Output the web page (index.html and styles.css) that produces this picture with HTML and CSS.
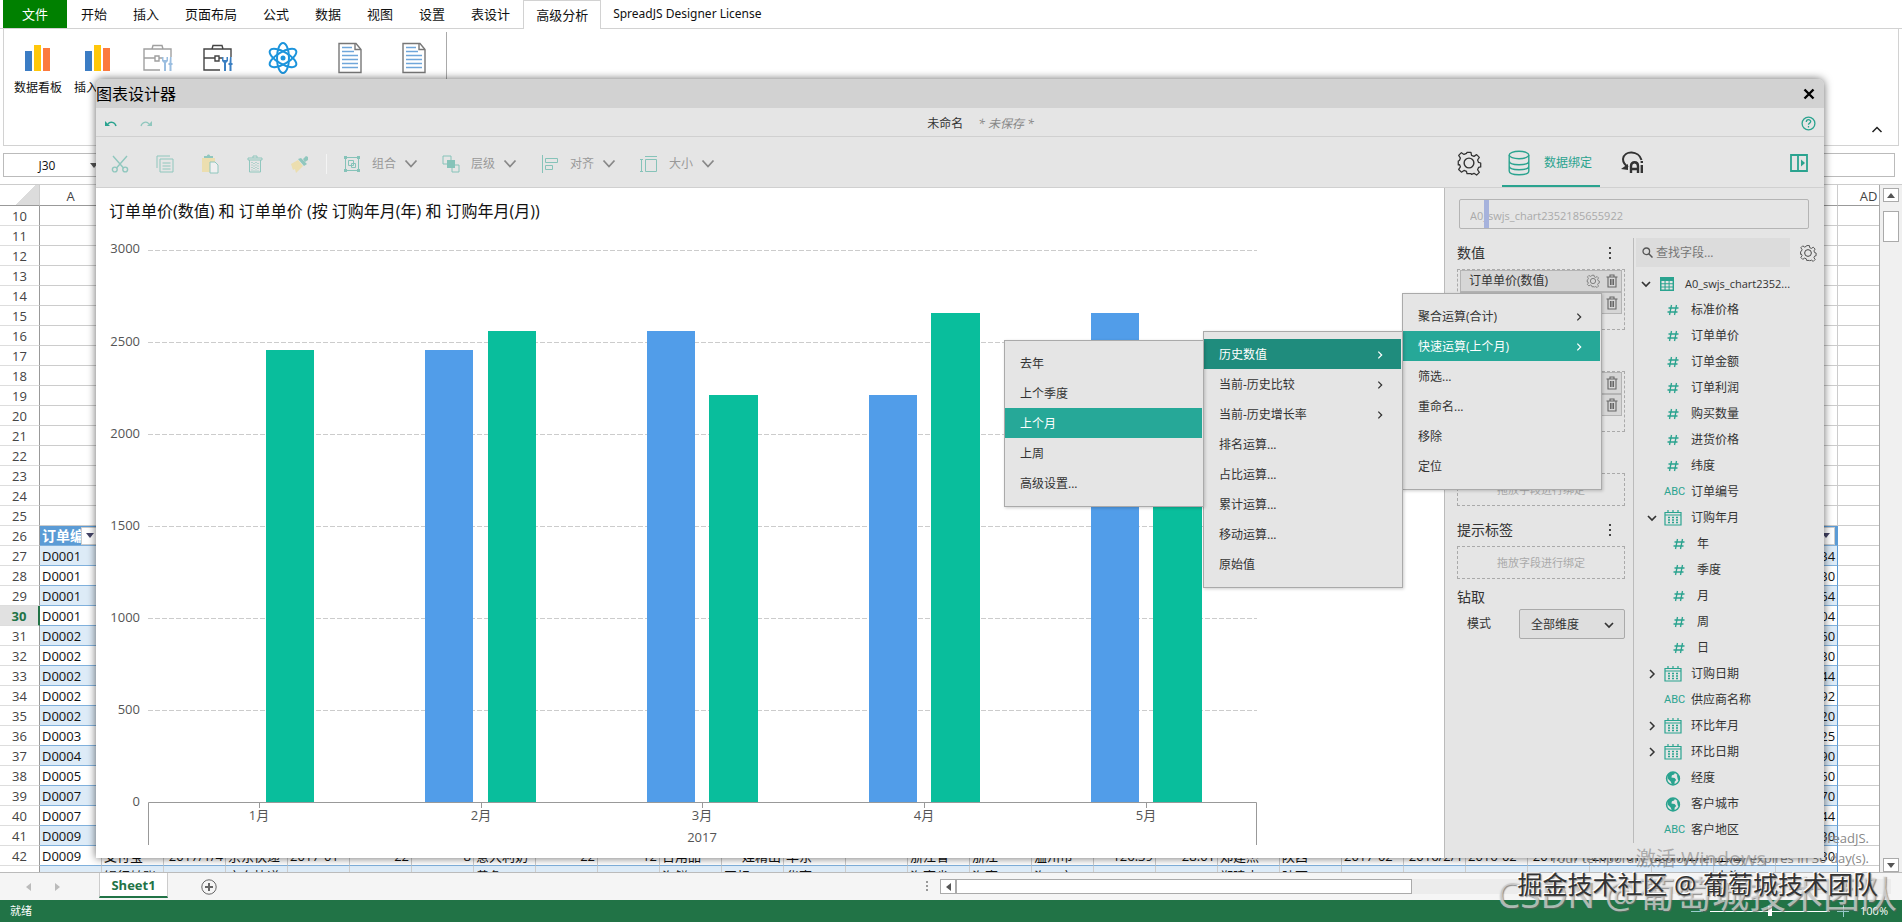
FILE: index.html
```html
<!DOCTYPE html>
<html lang="zh-CN">
<head>
<meta charset="utf-8">
<title>SpreadJS Designer</title>
<link rel="stylesheet" href="styles.css">
</head>
<body>
<svg class="sprite" aria-hidden="true">
  <symbol id="bars" viewBox="0 0 26 28"><path fill="#3b7cc4" d="M0 7h7v20H0z"/><path fill="#ffc70a" d="M9 1h7v26H9z"/><path fill="#fb7a3f" d="M18 4h7v23h-7z"/></symbol>
  <symbol id="case" viewBox="0 0 30 28"><g fill="none" stroke="#444" stroke-width="1.4"><path d="M17 26H1V5h27v8M1 14h11M16 14h3M12 12h4v5h-4zM9 5l1-3.500h9L20 5"/></g><path fill="#3a7fc2" d="M19 13v4l2 2v8h2v-8l2-2v-4h-1.500v3h-3v-3zM27 13h1.500v6h1v2h-1v6h-2v-6h-1v-2h1z"/></symbol>
  <symbol id="doc" viewBox="0 0 24 31"><path fill="#fff" stroke="#777" stroke-width="1.400" d="M1 1h17l5 6v23H1z"/><path fill="none" stroke="#777" stroke-width="1.400" d="M17 1v6h6"/><path stroke="#6fa6da" stroke-width="1.500" d="M4 5h10M4 9h12M4 13h16M4 17h16M4 21h16M4 25h16"/></symbol>
  <symbol id="gear" viewBox="0 0 24 24"><g fill="none" stroke="currentColor" stroke-width="1.300" stroke-linejoin="round"><path d="M10 1h4l.6 3.200 2.500 1 2.700-1.800 2.800 2.800-1.800 2.700 1 2.500 2.200.6v4l-2.200.6-1 2.300 1.800 2.700-2.800 2.800-2.700-1.800-2.500 1L14 23h-4l-.6-2.400-2.500-1-2.700 1.800-2.800-2.800 1.800-2.700-1-2.300L1 14v-4l1.200-.6 1-2.500L1.400 4.200l2.800-2.800 2.700 1.800 2.500-1z" transform="translate(1.200 1.200) scale(.9)"/><circle cx="12" cy="12" r="4.500"/></g></symbol>
  <symbol id="trash" viewBox="0 0 12 14"><g fill="none" stroke="currentColor" stroke-width="1.100"><path d="M.5 3h11M4 3V1h4v2M2 3v10h8V3M4.500 5v6M6 5v6M7.500 5v6"/></g></symbol>
  <symbol id="down" viewBox="0 0 12 12"><path fill="none" stroke="currentColor" stroke-width="1.700" d="M2 4l4 4 4-4"/></symbol>
  <symbol id="wide-down" viewBox="0 0 14 12"><path fill="none" stroke="#888" stroke-width="1.800" d="M1.500 2.500L7 8.500l5.500-6"/></symbol>
  <symbol id="right" viewBox="0 0 12 12"><path fill="none" stroke="currentColor" stroke-width="1.500" d="M4 2l4 4-4 4"/></symbol>
  <symbol id="num" viewBox="0 0 12 12"><path fill="none" stroke="currentColor" stroke-width="1.300" d="M4.500 1L2.500 11M9.500 1L7.500 11M1.500 4h10M.5 8h10"/></symbol>
  <symbol id="cal" viewBox="0 0 18 16"><path fill="none" stroke="currentColor" stroke-width="1.200" d="M1 2.500h16V15H1z"/><path stroke="currentColor" stroke-width="1.200" d="M1 5h16M4 0v3M9 0v3M14 0v3"/><path stroke="currentColor" stroke-width="1.500" stroke-dasharray="2 2" d="M4 7.500h11M4 10h11M4 12.500h11"/></symbol>
  <symbol id="globe" viewBox="0 0 14 14"><circle cx="7" cy="7" r="6" fill="#e5e5e5" stroke="currentColor" stroke-width="1.400"/><path fill="currentColor" d="M2 3l4-2 3 .3-1 2-2 .7-.5 2 3 .5 1.500 2L8.500 10v2.500L6 13l-1-3-3-3zM10.500 3.500L13 5v4l-1.500-1z"/></symbol>
  <symbol id="grid" viewBox="0 0 14 14"><path fill="currentColor" d="M0 0h14v14H0z"/><path fill="#e5e5e5" d="M1.500 4h3v2.200h-3zM5.600 4h3v2.200h-3zM9.600 4h3v2.200h-3zM1.500 7.200h3v2.200h-3zM5.600 7.200h3v2.200h-3zM9.600 7.200h3v2.200h-3zM1.500 10.400h3v2.200h-3zM5.600 10.400h3v2.200h-3zM9.600 10.400h3v2.200h-3z"/></symbol>
</svg>

<nav class="tabs">
  <button class="tab file">文件</button><button class="tab">开始</button><button class="tab">插入</button><button class="tab">页面布局</button><button class="tab">公式</button><button class="tab">数据</button><button class="tab">视图</button><button class="tab">设置</button><button class="tab">表设计</button><button class="tab active">高级分析</button><button class="tab">SpreadJS Designer License</button>
</nav>
<section class="ribbon">
  <button class="tool"><svg width="26" height="28"><use href="#bars"/></svg>数据看板</button>
  <button class="tool"><svg width="26" height="28"><use href="#bars"/></svg>插入图表</button>
  <button class="tool dim" aria-label="工具"><svg width="30" height="28"><use href="#case"/></svg></button>
  <button class="tool" aria-label="工具箱"><svg width="30" height="28"><use href="#case"/></svg></button>
  <button class="tool wide" aria-label="分析"><svg width="32" height="34" viewBox="0 0 32 34"><g fill="none" stroke="#1c94dc" stroke-width="2"><ellipse cx="16" cy="17" rx="6" ry="15"/><ellipse cx="16" cy="17" rx="6" ry="15" transform="rotate(60 16 17)"/><ellipse cx="16" cy="17" rx="6" ry="15" transform="rotate(120 16 17)"/></g><circle cx="16" cy="17" r="2.500" fill="#1c94dc"/></svg></button>
  <button class="tool mid" aria-label="文档"><svg width="24" height="31"><use href="#doc"/></svg></button>
  <button class="tool mid" aria-label="报表"><svg width="24" height="31"><use href="#doc"/></svg></button>
  <span class="ribbon-line"></span>
  <button class="collapse" aria-label="折叠"><svg width="12" height="12" viewBox="0 0 12 12"><path fill="none" stroke="#222" stroke-width="1.500" d="M1.500 8L6 3.500 10.500 8"/></svg></button>
</section>
<section class="formula">
  <div class="namebox"><input aria-label="名称框" value="J30"><i class="tri"></i></div>
  <input class="fx" aria-label="编辑栏">
</section>

<main class="sheet">
  <div class="view">
    <table>
      <colgroup><col class="c-head"><col span="30" class="c"></colgroup>
      <thead><tr><th class="corner"></th><th>A</th><th colspan="27"></th><th></th><th>AD</th></tr></thead>
      <tbody>
      <tr><th>10</th><td></td><td colspan="27"></td><td></td><td></td></tr>
      <tr><th>11</th><td></td><td colspan="27"></td><td></td><td></td></tr>
      <tr><th>12</th><td></td><td colspan="27"></td><td></td><td></td></tr>
      <tr><th>13</th><td></td><td colspan="27"></td><td></td><td></td></tr>
      <tr><th>14</th><td></td><td colspan="27"></td><td></td><td></td></tr>
      <tr><th>15</th><td></td><td colspan="27"></td><td></td><td></td></tr>
      <tr><th>16</th><td></td><td colspan="27"></td><td></td><td></td></tr>
      <tr><th>17</th><td></td><td colspan="27"></td><td></td><td></td></tr>
      <tr><th>18</th><td></td><td colspan="27"></td><td></td><td></td></tr>
      <tr><th>19</th><td></td><td colspan="27"></td><td></td><td></td></tr>
      <tr><th>20</th><td></td><td colspan="27"></td><td></td><td></td></tr>
      <tr><th>21</th><td></td><td colspan="27"></td><td></td><td></td></tr>
      <tr><th>22</th><td></td><td colspan="27"></td><td></td><td></td></tr>
      <tr><th>23</th><td></td><td colspan="27"></td><td></td><td></td></tr>
      <tr><th>24</th><td></td><td colspan="27"></td><td></td><td></td></tr>
      <tr><th>25</th><td></td><td colspan="27"></td><td></td><td></td></tr>
      <tr class="t title"><th>26</th><td><div class="fcell"><span>订单编号</span><b class="filter"></b></div></td><td colspan="27"></td><td><div class="fcell"><span></span><b class="filter"></b></div></td><td></td></tr>
      <tr class="t band"><th>27</th><td>D0001</td><td colspan="27"></td><td>34</td><td></td></tr>
      <tr class="t"><th>28</th><td>D0001</td><td colspan="27"></td><td>30</td><td></td></tr>
      <tr class="t band"><th>29</th><td>D0001</td><td colspan="27"></td><td>64</td><td></td></tr>
      <tr class="t current"><th>30</th><td>D0001</td><td colspan="27"></td><td>04</td><td></td></tr>
      <tr class="t band"><th>31</th><td>D0002</td><td colspan="27"></td><td>60</td><td></td></tr>
      <tr class="t"><th>32</th><td>D0002</td><td colspan="27"></td><td>30</td><td></td></tr>
      <tr class="t band"><th>33</th><td>D0002</td><td colspan="27"></td><td>44</td><td></td></tr>
      <tr class="t"><th>34</th><td>D0002</td><td colspan="27"></td><td>92</td><td></td></tr>
      <tr class="t band"><th>35</th><td>D0002</td><td colspan="27"></td><td>20</td><td></td></tr>
      <tr class="t"><th>36</th><td>D0003</td><td colspan="27"></td><td>25</td><td></td></tr>
      <tr class="t band"><th>37</th><td>D0004</td><td colspan="27"></td><td>90</td><td></td></tr>
      <tr class="t"><th>38</th><td>D0005</td><td colspan="27"></td><td>60</td><td></td></tr>
      <tr class="t band"><th>39</th><td>D0007</td><td colspan="27"></td><td>70</td><td></td></tr>
      <tr class="t"><th>40</th><td>D0007</td><td colspan="27"></td><td>44</td><td></td></tr>
      <tr class="t band"><th>41</th><td>D0009</td><td colspan="27"></td><td>30</td><td></td></tr>
      <tr class="t data"><th>42</th><td>D0009</td><td>支付宝</td><td class="r">2017/1/4</td><td>京东快递</td><td>2017-01</td><td class="r">22</td><td class="r">8</td><td>意大利奶</td><td class="r">22</td><td class="r">12</td><td>日用品</td><td class="r">娃精出</td><td>华东</td><td></td><td>浙江省</td><td>浙江</td><td>温州市</td><td class="r">126.39</td><td class="r">28.01</td><td>郑建杰</td><td>陕西</td><td>2017-02</td><td class="r">2016/2/1</td><td>2016-02</td><td class="r">2017/1/1</td><td>2017-01</td><td>2017/2/1</td><td>上海</td><td>30</td><td></td></tr>
      <tr class="t band data"><th></th><td></td><td>银行转账</td><td class="r">2017/1/4</td><td>京东快递</td><td></td><td></td><td></td><td>黄色</td><td></td><td></td><td>海鲜</td><td>国标</td><td>华南</td><td></td><td>海南省</td><td>海南</td><td>海口市</td><td></td><td></td><td>郑建杰</td><td>陕西</td><td></td><td class="r">2016/2/1</td><td></td><td class="r">2017/1/1</td><td></td><td>2017/2/1</td><td>上海</td><td></td><td></td></tr>
      </tbody>
    </table>
    <p class="license">Powered by SpreadJS.<br>Your temporary deployment key expires in 30 day(s).</p>
  </div>
  <div class="vbar"><button aria-label="上"><i class="tri up"></i></button><span class="vthumb"></span><button class="last" aria-label="下"><i class="tri"></i></button></div>
</main>
<section class="sheetbar">
  <i class="nav l"></i><i class="nav rr"></i>
  <button class="sheet-tab">Sheet1</button>
  <button class="add" aria-label="新建"><svg width="16" height="16" viewBox="0 0 16 16"><circle cx="8" cy="8" r="7.200" fill="none" stroke="#666"/><path stroke="#666" stroke-width="2" d="M8 4v8M4 8h8"/></svg></button>
  <span class="grip"></span>
  <div class="hbar"><button aria-label="左"><i class="nav l dark"></i></button><span class="hthumb"></span></div>
</section>
<footer class="status"><span>就绪</span><div class="zoom"><b class="minus"></b><input type="range" aria-label="缩放" value="50"><b class="plus"></b><span>100%</span></div></footer>

<section class="dialog" role="dialog" aria-label="图表设计器">
  <header class="d-title"><h1>图表设计器</h1><button aria-label="关闭"><svg width="12" height="12" viewBox="0 0 12 12"><path stroke="#000" stroke-width="2.400" d="M1.500 1.500l9 9M10.500 1.500l-9 9"/></svg></button></header>
  <div class="d-bar">
    <button class="undo" aria-label="撤销"><svg width="12" height="8" viewBox="0 0 12 8"><path fill="#2aa38f" d="M0 1l5 5H0z"/><path fill="none" stroke="#2aa38f" stroke-width="1.500" d="M3 4c2-3 7-2 8 2"/></svg></button>
    <button class="undo faint" aria-label="重做"><svg width="12" height="8" viewBox="0 0 12 8"><path fill="#2aa38f" d="M12 1v5H7z"/><path fill="none" stroke="#2aa38f" stroke-width="1.200" d="M9 4C7 1 2 2 1 6"/></svg></button>
    <p class="doc-name">未命名 <em>* 未保存 *</em></p>
    <button class="help" aria-label="帮助"><svg width="15" height="15" viewBox="0 0 15 15"><circle cx="7.500" cy="7.500" r="6.400" fill="none" stroke="#2aa38f" stroke-width="1.300"/><path fill="none" stroke="#2aa38f" stroke-width="1.300" d="M5.300 6c0-3 4.400-3 4.400-.4 0 1.600-2.200 1.500-2.200 3.200M7.500 10v1.400"/></svg></button>
  </div>
  <div class="d-tools">
    <div class="edit">
      <button class="ib" aria-label="剪切"><svg width="18" height="18" viewBox="0 0 18 18"><g fill="none" stroke="#2aa38f" stroke-width="1.400"><path d="M2 1l10.500 12M16 1L5.500 13"/><circle cx="3.800" cy="14.500" r="2.400"/><circle cx="14.200" cy="14.500" r="2.400"/></g></svg></button>
      <button class="ib" aria-label="复制"><svg width="18" height="18" viewBox="0 0 18 18"><g fill="none" stroke="#2aa38f"><path d="M1 13V1h13M4 4h13v13H4zM6.500 8h8M6.500 11h8M6.500 14h8"/></g></svg></button>
      <button class="ib" aria-label="粘贴"><svg width="18" height="20" viewBox="0 0 18 20"><path fill="#f5d76e" d="M1 4h13v14H1z"/><path fill="#2aa38f" d="M3 4V2h3c0-2 3-2 3 0h3v2z"/><path fill="#fff" stroke="#2aa38f" d="M9 8h5l3 3v8H9z"/></svg></button>
      <button class="ib" aria-label="删除"><svg width="16" height="18" viewBox="0 0 16 18"><g fill="none" stroke="#2aa38f"><path d="M1 3h14v2H1zM6 3V1h4v2M2.500 5v12h11V5"/><path stroke-width="1.200" stroke-dasharray="1 1.500" d="M5 7v9M7 8v8M9 7v9M11 8v8"/></g></svg></button>
      <button class="ib" aria-label="格式刷"><svg width="18" height="18" viewBox="0 0 18 18"><path fill="#f5d76e" d="M0 9l7-4 5 6-5 5-2 2-1-4-2 1z"/><path fill="#2aa38f" d="M7 4l3-1 6 6-3 2zM12 4l3-3 2 1v3l-3 2z"/></svg></button>
      <span class="sep"></span>
      <button class="drop"><svg width="18" height="18" viewBox="0 0 18 18"><g fill="none" stroke="#2aa38f"><path d="M2.500 2.500h13v13h-13zM5.500 5.500h5v5h-5zM8.500 8.500h4v4h-4z"/></g><path fill="#2aa38f" d="M1 1h3v3H1zM14 1h3v3h-3zM1 14h3v3H1zM14 14h3v3h-3z"/></svg><span>组合</span><svg width="14" height="12"><use href="#wide-down"/></svg></button>
      <button class="drop"><svg width="18" height="18" viewBox="0 0 18 18"><g fill="none" stroke="#2aa38f"><path d="M1 1h8v8H1zM10 10h7v7h-7z"/></g><path fill="#2aa38f" d="M5 5h8v8H5z"/></svg><span>层级</span><svg width="14" height="12"><use href="#wide-down"/></svg></button>
      <button class="drop"><svg width="18" height="18" viewBox="0 0 18 18"><g fill="none" stroke="#2aa38f"><path d="M1.500 0v18M4.500 3.500h12v4h-12zM4.500 10.500h7v4h-7z"/></g></svg><span>对齐</span><svg width="14" height="12"><use href="#wide-down"/></svg></button>
      <button class="drop"><svg width="18" height="18" viewBox="0 0 18 18"><g fill="none" stroke="#2aa38f"><path d="M5.500 4.500h11v12h-11zM5 1.500h12M1.500 4v13M0 4.500h3M0 16.500h3"/></g></svg><span>大小</span><svg width="14" height="12"><use href="#wide-down"/></svg></button>
    </div>
    <div class="modes">
      <button class="mode" aria-label="设置"><svg width="26" height="26"><use href="#gear"/></svg></button>
      <button class="mode on"><svg width="22" height="26" viewBox="0 0 22 26"><g fill="none" stroke="#2aa38f" stroke-width="1.400"><ellipse cx="11" cy="5" rx="9.800" ry="3.800"/><path d="M1.200 5v16c0 5 19.600 5 19.600 0V5M1.200 11c0 5 19.600 5 19.600 0M1.200 16c0 5 19.600 5 19.600 0"/></g></svg><span>数据绑定</span></button>
      <button class="mode" aria-label="AI"><svg width="24" height="24" viewBox="0 0 24 24"><path fill="none" stroke="#333" stroke-width="2" d="M21.500 9C19-.5 4-1 3 8c0 4 2 6 5 8"/><path fill="#333" d="M1 18l7-5v6z"/><path fill="none" stroke="#333" stroke-width="2.400" d="M11 22v-7c0-5 7-5 7 0v7M11 18h7M21.800 14v8M21.800 10v2"/></svg></button>
      <button class="panel-toggle" aria-label="收起面板"><svg width="18" height="18" viewBox="0 0 18 18"><path fill="none" stroke="#2aa38f" stroke-width="1.800" d="M1 1h16v16H1zM8 1v16"/><path fill="#2aa38f" d="M11 5.500l4 3.500-4 3.500z"/></svg></button>
    </div>
  </div>
  <div class="d-body">
    <svg class="chart" viewBox="0 0 1348 670" role="img" aria-label="订单单价">
      <text class="ct" x="13" y="29">订单单价(数值) 和 订单单价 (按 订购年月(年) 和 订购年月(月))</text>
      <g class="ylab"><text x="44" y="65">3000</text><text x="44" y="158">2500</text><text x="44" y="250">2000</text><text x="44" y="342">1500</text><text x="44" y="434">1000</text><text x="44" y="526">500</text><text x="44" y="618">0</text></g>
      <path class="gl" d="M52 62.500h1109M52 154.500h1109M52 246.500h1109M52 338.500h1109M52 430.500h1109M52 522.500h1109"/>
      <path fill="#519de9" d="M329 162h48v452h-48zM551 143h48v471h-48zM773 207h48v407h-48zM995 125h48v489h-48z"/>
      <path fill="#09be9c" d="M170 162h48v452h-48zM392 143h48v471h-48zM613 207h49v407h-49zM835 125h49v489h-49zM1057 220h49v394h-49z"/>
      <path class="ax" d="M52.500 657v-42.500h1108V657M163.500 614v6M385.500 614v6M606.500 614v6M828.500 614v6M1050.500 614v6"/>
      <g class="xlab"><text x="163" y="632">1月</text><text x="385" y="632">2月</text><text x="606" y="632">3月</text><text x="828" y="632">4月</text><text x="1050" y="632">5月</text><text x="606" y="654">2017</text></g>
    </svg>
    <aside class="side">
      <div class="id-field"><input aria-label="数据集" value="A0_swjs_chart2352185655922"></div>
      <div class="cols">
        <div class="bind">
          <h2>数值 <i class="dots"></i></h2>
          <div class="zone">
            <div class="pill"><span>订单单价(数值)</span><svg width="14" height="14"><use href="#gear"/></svg><svg width="12" height="14"><use href="#trash"/></svg></div>
            <div class="pill"><span></span><svg width="12" height="14"><use href="#trash"/></svg></div>
          </div>
          <div class="zone after">
            <div class="pill"><span></span><svg width="12" height="14"><use href="#trash"/></svg></div>
            <div class="pill"><span></span><svg width="12" height="14"><use href="#trash"/></svg></div>
          </div>
          <div class="zone empty after">拖放字段进行绑定</div>
          <h2 class="next">提示标签 <i class="dots"></i></h2>
          <div class="zone empty">拖放字段进行绑定</div>
          <h2 class="next drill">钻取</h2>
          <div class="mode-row"><label for="mode">模式</label><div class="sel"><select id="mode"><option>全部维度</option></select><svg width="12" height="12"><use href="#down"/></svg></div></div>
        </div>
        <div class="fields">
          <div class="find"><label><svg width="11" height="11" viewBox="0 0 11 11"><circle cx="4.300" cy="4.300" r="3.300" fill="none" stroke="#555" stroke-width="1.300"/><path stroke="#555" stroke-width="1.500" d="M6.800 6.800l3.700 3.700"/></svg><input placeholder="查找字段..." aria-label="查找字段"></label><svg class="find-gear" width="18" height="18"><use href="#gear"/></svg></div>
          <ul class="tree">
            <li class="root"><svg class="tw" width="12" height="12"><use href="#down"/></svg><svg class="ic" width="14" height="14"><use href="#grid"/></svg><span>A0_swjs_chart2352...</span></li>
            <li><i class="tw"></i><svg class="ic" width="12" height="12"><use href="#num"/></svg>标准价格</li>
            <li><i class="tw"></i><svg class="ic" width="12" height="12"><use href="#num"/></svg>订单单价</li>
            <li><i class="tw"></i><svg class="ic" width="12" height="12"><use href="#num"/></svg>订单金额</li>
            <li><i class="tw"></i><svg class="ic" width="12" height="12"><use href="#num"/></svg>订单利润</li>
            <li><i class="tw"></i><svg class="ic" width="12" height="12"><use href="#num"/></svg>购买数量</li>
            <li><i class="tw"></i><svg class="ic" width="12" height="12"><use href="#num"/></svg>进货价格</li>
            <li><i class="tw"></i><svg class="ic" width="12" height="12"><use href="#num"/></svg>纬度</li>
            <li><i class="tw"></i><span class="ic abc">ABC</span>订单编号</li>
            <li><svg class="tw" width="12" height="12"><use href="#down"/></svg><svg class="ic" width="18" height="16"><use href="#cal"/></svg>订购年月</li>
            <li class="sub"><i class="tw"></i><svg class="ic" width="12" height="12"><use href="#num"/></svg>年</li>
            <li class="sub"><i class="tw"></i><svg class="ic" width="12" height="12"><use href="#num"/></svg>季度</li>
            <li class="sub"><i class="tw"></i><svg class="ic" width="12" height="12"><use href="#num"/></svg>月</li>
            <li class="sub"><i class="tw"></i><svg class="ic" width="12" height="12"><use href="#num"/></svg>周</li>
            <li class="sub"><i class="tw"></i><svg class="ic" width="12" height="12"><use href="#num"/></svg>日</li>
            <li><svg class="tw" width="12" height="12"><use href="#right"/></svg><svg class="ic" width="18" height="16"><use href="#cal"/></svg>订购日期</li>
            <li><i class="tw"></i><span class="ic abc">ABC</span>供应商名称</li>
            <li><svg class="tw" width="12" height="12"><use href="#right"/></svg><svg class="ic" width="18" height="16"><use href="#cal"/></svg>环比年月</li>
            <li><svg class="tw" width="12" height="12"><use href="#right"/></svg><svg class="ic" width="18" height="16"><use href="#cal"/></svg>环比日期</li>
            <li><i class="tw"></i><svg class="ic" width="15" height="15"><use href="#globe"/></svg>经度</li>
            <li><i class="tw"></i><svg class="ic" width="15" height="15"><use href="#globe"/></svg>客户城市</li>
            <li><i class="tw"></i><span class="ic abc">ABC</span>客户地区</li>
          </ul>
        </div>
      </div>
    </aside>
  </div>
  <div class="menu m1">
    <button>聚合运算(合计)<svg width="10" height="10"><use href="#right"/></svg></button><button class="hl">快速运算(上个月)<svg width="10" height="10"><use href="#right"/></svg></button><button>筛选...</button><button>重命名...</button><button>移除</button><button>定位</button>
  </div>
  <div class="menu m2">
    <button class="hl deep">历史数值<svg width="10" height="10"><use href="#right"/></svg></button><button>当前-历史比较<svg width="10" height="10"><use href="#right"/></svg></button><button>当前-历史增长率<svg width="10" height="10"><use href="#right"/></svg></button><button>排名运算...</button><button>占比运算...</button><button>累计运算...</button><button>移动运算...</button><button>原始值</button>
  </div>
  <div class="menu m3">
    <button>去年</button><button>上个季度</button><button class="hl">上个月</button><button>上周</button><button>高级设置...</button>
  </div>
</section>
<div class="mark activate">激活 Windows</div>
<div class="mark csdn">CSDN @葡萄城技术团队</div>
<div class="mark juejin">掘金技术社区 @ 葡萄城技术团队</div>
</body>
</html>
```
FILE: styles.css
```css
* { box-sizing: border-box; }
body { margin: 0; height: 100vh; display: flex; flex-direction: column; overflow: hidden; position: relative; background: #fff; color: #111; font: 12px/16px "Open Sans", "Noto Sans CJK SC", sans-serif; }
button, input, select { font: inherit; color: inherit; border: 0; background: none; padding: 0; margin: 0; border-radius: 0; }
h1, h2, p, ul { margin: 0; padding: 0; font-weight: normal; }
li { list-style: none; }
svg { flex: none; display: block; }
.sprite { position: absolute; width: 0; height: 0; }
.tri { display: block; border: 4px solid transparent; border-top: 5px solid #555; border-bottom: 0; }
.tri.up { border-top: 0; border-bottom: 5px solid #555; }

.tabs { flex: none; display: flex; height: 29px; padding-left: 3px; border-bottom: 1px solid #d2d2d2; }
.tab { padding: 0 13px; font-family: "Noto Sans", "Noto Sans CJK SC", sans-serif; font-size: 13px; white-space: nowrap; }
.tab:last-child { padding-left: 12px; font-size: 12px; }
.tab.file { width: 64px; background: #008000; color: #fff; margin-right: 1px; }
.tab.active { height: 29px; padding: 0 12px; border: 1px solid #d2d2d2; border-width: 1px 1px 0; background: #fff; }
.ribbon { flex: none; display: flex; height: 117px; margin: 0 3px; padding-left: 4px; border: 1px solid #d2d2d2; border-top: 0; }
.tool { display: flex; flex-direction: column; align-items: center; width: 60px; height: 90px; padding-top: 12px; white-space: nowrap; overflow: hidden; }
.tool svg { height: 34px; margin-bottom: 5px; }
.tool.dim { opacity: .5; }
.tool.wide { width: 70px; }
.tool.mid { width: 64px; }
.ribbon-line { width: 1px; height: 100px; margin-top: 3px; background: #aaa; }
.collapse { margin: 95px 15px 0 auto; height: 12px; }
.formula { flex: none; display: flex; gap: 6px; height: 39px; padding: 7px 7px 7px 3px; border-bottom: 1px solid #ccc; }
.namebox { display: flex; align-items: center; width: 105px; border: 1px solid #bbb; }
.namebox input { width: 86px; padding-top: 1px; text-align: center; font-size: 12px; }
.fx { flex: 1; border: 1px solid #bbb; }

.sheet { flex: 1; min-height: 0; display: grid; grid-template-columns: 1fr 22px; }
.view { position: relative; overflow: hidden; border-right: 1px solid #aaa; }
.view table { table-layout: fixed; width: 1900px; border-spacing: 0; font-size: 13px; line-height: 18px; }
.c-head { width: 40px; }
.c { width: 62px; }
.view th { height: 20px; padding: 0; border: 1px solid #ddd; border-width: 0 0 1px; font-weight: normal; color: #444; overflow: hidden; }
.view tbody th { border-right: 1px solid #999; }
.view thead th { height: 21px; padding-top: 2px; border-bottom-color: #999; border-right: 1px solid #ccc; }
.view .corner { background: linear-gradient(135deg, #fff 60%, #dcdcdc 60%); }
.view td { height: 20px; padding: 0 2px; border: 1px solid #ccc; border-width: 0 1px 1px 0; white-space: nowrap; overflow: hidden; color: #111; }
.view .t td { border-bottom-color: #7fb0dc; }
.view .t td:nth-last-child(2) { text-align: right; border-right-color: #5b9bd5; }
.view .t td:last-child { border-bottom-color: #ccc; background: #fff; }
.view .r { text-align: right; }
.view .band td { background: #ddebf7; }
.view .title td { background: #5b9bd5; color: #fff; font-weight: bold; }
.view .title td:last-child { background: #fff; }
.view .current th { background: #e1e1e1; color: #217346; font-weight: bold; border-right: 2px solid #217346; }
.fcell { display: flex; justify-content: space-between; height: 18px; }
.fcell span { flex: 1; width: 0; overflow: hidden; font-size: 14px; }
.filter { display: grid; place-items: center; width: 18px; background: #fff; border: 1px solid #ccc; }
.filter::before { content: ""; border: 4px solid transparent; border-top: 5px solid #446; border-bottom: 0; }
.license { position: absolute; right: 10px; bottom: 4px; text-align: right; font-size: 13px; line-height: 20px; color: #888; white-space: nowrap; }
.vbar { display: flex; flex-direction: column; align-items: center; padding-top: 3px; background: #f0f0f0; }
.vbar button { display: grid; place-items: center; width: 16px; height: 14px; background: #fff; border: 1px solid #aaa; }
.vthumb { width: 16px; height: 31px; margin-top: 9px; background: #fff; border: 1px solid #aaa; }
.vbar .last { margin-top: auto; }

.sheetbar { flex: none; display: flex; align-items: center; height: 28px; background: #f5f5f5; border-top: 1px solid #bbb; }
.nav { border: 4px solid transparent; border-left: 5px solid #bbb; border-right: 0; }
.nav.l { border-right: 5px solid #bbb; border-left: 0; margin-left: 26px; }
.nav.rr { margin-left: 24px; }
.nav.l.dark { border-right-color: #555; margin: 0; }
.sheet-tab { align-self: flex-start; width: 69px; height: 25px; margin-left: 39px; background: #fff; border: 1px solid #ccc; border-width: 0 1px 2px; border-bottom-color: #217346; color: #217346; font-size: 13px; font-weight: bold; }
.add { margin-left: 33px; }
.grip { width: 2px; height: 11px; margin-left: auto; background: repeating-linear-gradient(#999 0 2px, transparent 2px 4px); }
.hbar { display: flex; flex: 0 0 50%; height: 15px; margin: 0 11px 0 12px; background: #ececec; }
.hbar button { display: grid; place-items: center; width: 16px; background: #fff; border: 1px solid #aaa; }
.hthumb { width: 48%; background: #fff; border: 1px solid #aaa; }
.status { flex: none; display: flex; align-items: center; justify-content: space-between; height: 22px; padding: 0 14px 0 10px; background: #217346; color: #fff; font-size: 11px; }
.zoom { display: flex; align-items: center; gap: 7px; }
.zoom input { appearance: none; width: 120px; height: 1px; background: #fff; }
.zoom input::-webkit-slider-thumb { appearance: none; width: 4px; height: 10px; background: #fff; }
.minus { width: 12px; height: 1px; background: #9cc; }
.plus { width: 12px; height: 12px; background: linear-gradient(#9cc, #9cc) center / 12px 1px no-repeat, linear-gradient(#9cc, #9cc) center / 1px 12px no-repeat; }
.zoom span { margin-left: 4px; }

.dialog { position: absolute; inset: 79px 78px 64px 96px; display: flex; flex-direction: column; background: #e5e5e5; color: #333; border-radius: 6px 6px 0 0; box-shadow: 0 0 9px rgba(0, 0, 0, .6); }
.d-title { flex: none; display: flex; align-items: center; justify-content: space-between; height: 29px; padding-right: 9px; background: #d2d2d2; border-radius: 6px 6px 0 0; color: #000; }
.d-title h1 { font-size: 16px; line-height: 24px; }
.d-bar { flex: none; display: flex; align-items: center; height: 29px; padding: 3px 8px 0 9px; border-bottom: 1px solid #d0d0d0; }
.undo { width: 12px; margin-right: 23px; }
.faint { opacity: .45; }
.doc-name { flex: 1; padding-right: 15px; text-align: center; }
.doc-name em { margin-left: 12px; color: #888; }
.d-tools { flex: none; display: flex; justify-content: space-between; height: 51px; border-bottom: 1px solid #d0d0d0; }
.edit { display: flex; align-items: center; padding: 3px 0 0 1px; }
.ib { display: grid; place-items: center; width: 45px; opacity: .45; }
.sep { width: 1px; height: 20px; margin: 0 10px 0 4px; background: #f4f4f4; }
.drop { display: flex; align-items: center; width: 99px; padding-left: 6px; color: #999; }
.drop svg:first-child { opacity: .5; }
.drop span { margin: 0 8px 0 11px; }
.modes { flex: none; display: flex; width: 379px; padding-top: 2px; }
.mode { display: grid; place-items: center; width: 48px; color: #333; }
.mode.on { display: flex; align-items: center; gap: 14px; width: 98px; margin: 0 8px 0 9px; padding: 2px 6px 0; color: #2aa38f; border-bottom: 2px solid #2aa38f; }
.panel-toggle { margin: 0 16px 0 auto; }
.d-body { flex: 1; min-height: 0; display: flex; background: #fff; }
.chart { flex: 1; min-width: 0; height: auto; align-self: flex-start; font-family: "Open Sans", "Noto Sans CJK SC", sans-serif; }
.ct { font-size: 16px; fill: #111; }
.ylab { font-size: 13px; text-anchor: end; fill: #555; }
.xlab { font-size: 13px; text-anchor: middle; fill: #555; }
.gl { stroke: #ccc; stroke-dasharray: 5 2; }
.ax { stroke: #999; fill: none; }

.side { flex: none; display: flex; flex-direction: column; width: 380px; padding: 11px 15px 15px 0; background: #e5e5e5; border-left: 1px solid #bbb; }
.id-field { position: relative; flex: none; margin-left: 14px; }
.id-field input { display: block; width: 100%; height: 30px; padding: 3px 10px 0; border: 1px solid #b4b4b4; border-radius: 2px; color: #aaa; font-size: 11px; }
.id-field::after { content: ""; position: absolute; left: 25px; top: 1px; width: 5px; height: 28px; background: #a6b2dc; }
.cols { flex: 1; display: flex; margin-top: 9px; }
.bind { width: 189px; padding: 5px 8px 0 12px; border-right: 1px solid #bbb; }
.bind h2 { display: flex; align-items: center; justify-content: space-between; height: 20px; margin-bottom: 6px; padding-right: 14px; font-size: 14px; }
.bind .next { margin-top: 14px; }
.bind .drill { margin: 8px 0 2px; }
.dots { width: 2px; height: 12px; background: repeating-linear-gradient(#444 0 2px, transparent 2px 5px); }
.zone { height: 61px; padding: 0 2px; border: 1px dashed #aaa; }
.after { margin-top: 41px; }
.empty { display: grid; place-items: center; height: 33px; color: #aaa; font-size: 11px; }
.pill { display: flex; align-items: center; gap: 6px; height: 22px; padding: 0 3px 0 8px; background: #d6d6d6; border: 1px solid #b4b4b4; }
.pill span { flex: 1; }
.pill svg { color: #666; }
.mode-row { display: flex; align-items: center; justify-content: space-between; padding-left: 10px; }
.sel { position: relative; width: 106px; }
.sel select { appearance: none; display: block; width: 100%; height: 30px; padding: 2px 11px 0; border: 1px solid #aaa; border-radius: 2px; background: #dedede; }
.sel svg { position: absolute; right: 10px; top: 10px; pointer-events: none; }
.fields { flex: 1; padding-left: 2px; }
.find { display: flex; align-items: center; justify-content: space-between; margin-right: -8px; }
.find label { display: flex; align-items: center; gap: 3px; width: 154px; height: 29px; padding-left: 6px; background: #dcdcdc; color: #777; }
.find input { width: 120px; }
.find input::placeholder { color: #777; }
.find-gear { color: #444; }
.tree { padding-top: 4px; }
.tree li { display: flex; align-items: center; height: 26px; padding-left: 10px; }
.tree .root { padding-left: 4px; font-size: 11px; }
.tree .sub { padding-left: 16px; }
.tw { width: 12px; flex: none; }
.ic { width: 18px; margin: 0 9px 0 6px; color: #2aa38f; }
.abc { font: 11px/14px Roboto, sans-serif; text-align: center; }

.menu { position: absolute; width: 200px; padding: 7px 1px 8px 0; background: #e5e5e5; border: 1px solid #aaa; box-shadow: 1px 1px 3px rgba(0, 0, 0, .2); }
.menu button { display: flex; align-items: center; justify-content: space-between; width: 100%; height: 30px; padding: 2px 16px 0 15px; text-align: left; }
.m1 { left: 1306px; top: 214px; }
.m2 { left: 1107px; top: 252px; }
.m3 { left: 908px; top: 261px; }
.menu .hl { background: #26a898; color: #fff; }
.menu .deep { background: #1f8c7d; }

.mark { position: absolute; white-space: nowrap; pointer-events: none; }
.activate { right: 136px; bottom: 49px; font-size: 20px; line-height: 28px; color: rgba(120, 120, 120, .55); }
.csdn { right: 5px; bottom: 3px; font-size: 37px; line-height: 50px; color: rgba(235, 235, 235, .65); text-shadow: 1px 1px 1px rgba(100, 100, 100, .7); }
.juejin { right: 24px; bottom: 21px; font-size: 25px; line-height: 34px; color: #333; text-shadow: -1px -1px 0 #fff, 1px 1px 1px #999; }
```
